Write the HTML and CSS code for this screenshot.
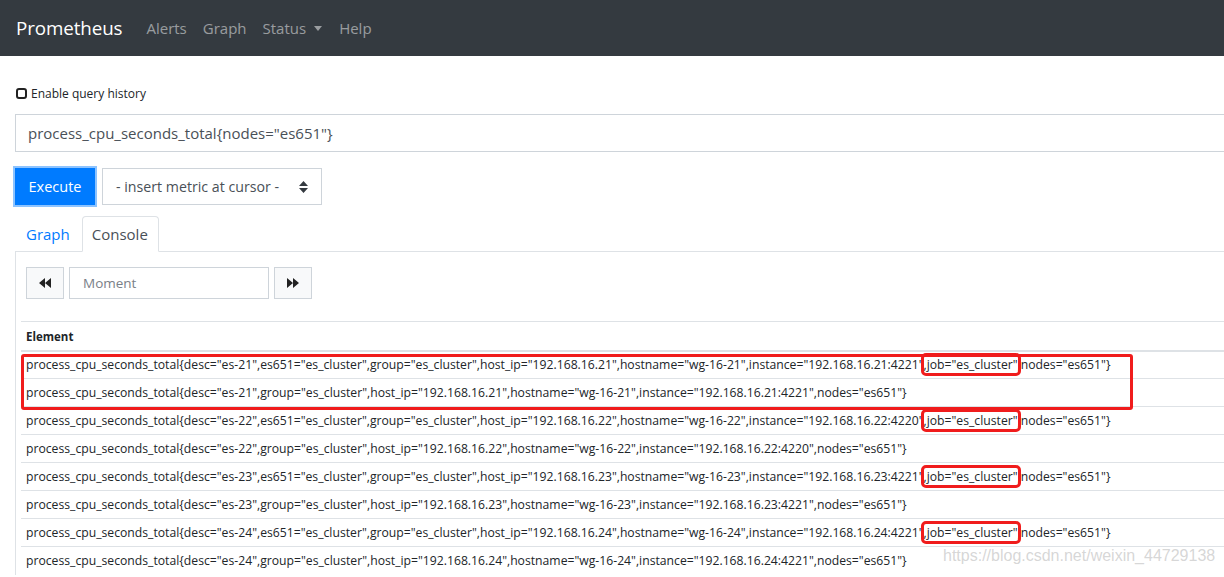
FILE: index.html
```html
<!DOCTYPE html>
<html>
<head>
<meta charset="utf-8">
<link rel="stylesheet" href="styles.css">
</head>
<body>
<nav class="navbar">
  <span class="brand">Prometheus</span>
  <a class="nav-link">Alerts</a>
  <a class="nav-link">Graph</a>
  <a class="nav-link dropdown">Status <span class="caret"></span></a>
  <a class="nav-link">Help</a>
</nav>
<main class="main">
  <label class="history"><input type="checkbox" class="check"> Enable query history</label>
  <div class="expr">process_cpu_seconds_total{nodes="es651"}</div>
  <div class="controls">
    <button class="execute">Execute</button>
    <div class="select">- insert metric at cursor -
      <svg class="updown" width="9" height="12" viewBox="0 0 9 12"><path d="M4.5 0L9 5H0z M4.5 12L0 7h9z" fill="#343a40"/></svg>
    </div>
  </div>
  <div class="tabs">
    <span class="tab">Graph</span>
    <span class="tab active">Console</span>
  </div>
  <div class="panel">
    <div class="moment-row">
      <button class="step"><svg width="12" height="10" viewBox="0 0 12 10"><path d="M6 0v10L0 5z M12 0v10L6 5z" fill="#222"/></svg></button>
      <div class="moment">Moment</div>
      <button class="step"><svg width="12" height="10" viewBox="0 0 12 10"><path d="M0 0v10l6-5z M6 0v10l6-5z" fill="#222"/></svg></button>
    </div>
    <div class="table-wrap">
      <table class="data">
        <thead><tr><th>Element</th></tr></thead>
        <tbody>
          <tr><td>process_cpu_seconds_total{desc="es-21",es651="es_cluster",group="es_cluster",host_ip="192.168.16.21",hostname="wg-16-21",instance="192.168.16.21:4221"<span class="mark">,job="es_cluster"</span>,nodes="es651"}</td></tr>
          <tr><td>process_cpu_seconds_total{desc="es-21",group="es_cluster",host_ip="192.168.16.21",hostname="wg-16-21",instance="192.168.16.21:4221",nodes="es651"}</td></tr>
          <tr><td>process_cpu_seconds_total{desc="es-22",es651="es_cluster",group="es_cluster",host_ip="192.168.16.22",hostname="wg-16-22",instance="192.168.16.22:4220"<span class="mark">,job="es_cluster"</span>,nodes="es651"}</td></tr>
          <tr><td>process_cpu_seconds_total{desc="es-22",group="es_cluster",host_ip="192.168.16.22",hostname="wg-16-22",instance="192.168.16.22:4220",nodes="es651"}</td></tr>
          <tr><td>process_cpu_seconds_total{desc="es-23",es651="es_cluster",group="es_cluster",host_ip="192.168.16.23",hostname="wg-16-23",instance="192.168.16.23:4221"<span class="mark">,job="es_cluster"</span>,nodes="es651"}</td></tr>
          <tr><td>process_cpu_seconds_total{desc="es-23",group="es_cluster",host_ip="192.168.16.23",hostname="wg-16-23",instance="192.168.16.23:4221",nodes="es651"}</td></tr>
          <tr><td>process_cpu_seconds_total{desc="es-24",es651="es_cluster",group="es_cluster",host_ip="192.168.16.24",hostname="wg-16-24",instance="192.168.16.24:4221"<span class="mark">,job="es_cluster"</span>,nodes="es651"}</td></tr>
          <tr><td>process_cpu_seconds_total{desc="es-24",group="es_cluster",host_ip="192.168.16.24",hostname="wg-16-24",instance="192.168.16.24:4221",nodes="es651"}</td></tr>
        </tbody>
      </table>
      <div class="big-mark"></div>
    </div>
  </div>
</main>
<div class="watermark">https://blog.csdn.net/weixin_44729138</div>
</body>
</html>
```
FILE: styles.css
```css
html, body {
  margin: 0;
  padding: 0;
  overflow: hidden;
  height: 577px;
  background: #fff;
}
body {
  font-family: "Open Sans", "Noto Sans", sans-serif;
  color: #212529;
  position: relative;
}
.navbar {
  height: 56px;
  background: #343a40;
  display: flex;
  align-items: center;
  padding: 0 16px;
  box-sizing: border-box;
}
.brand {
  color: #fff;
  font-size: 18.8px;
  margin-right: 16px;
  letter-spacing: -0.1px;
}
.nav-link {
  color: rgba(255,255,255,.5);
  font-size: 15px;
  padding: 0 8px;
  display: flex;
  align-items: center;
}
.caret {
  display: inline-block;
  width: 0;
  height: 0;
  border-left: 4px solid transparent;
  border-right: 4px solid transparent;
  border-top: 5px solid rgba(255,255,255,.5);
  margin-left: 8px;
  margin-right: 1px;
}
.main {
  padding: 0 0 0 15px;
  width: 1300px;
}
.history {
  display: flex;
  align-items: center;
  font-size: 12px;
  margin-top: 30px;
  height: 14px;
  color: #212529;
}
.check {
  appearance: none;
  -webkit-appearance: none;
  width: 11px;
  height: 11px;
  border: 2px solid #222;
  border-radius: 3px;
  margin: 0 4px 0 1px;
  box-sizing: border-box;
}
.expr {
  margin-top: 14px;
  height: 38px;
  border: 1px solid #ced4da;
  box-sizing: border-box;
  padding-left: 12px;
  display: flex;
  align-items: center;
  font-size: 15px;
  color: #495057;
}
.controls {
  display: flex;
  margin-top: 16px;
  height: 37px;
}
.execute {
  width: 80px;
  height: 37px;
  background: #007bff;
  color: #fff;
  border: 1px solid #007bff;
  border-radius: 0;
  font-family: inherit;
  font-size: 14.5px;
  box-shadow: 0 0 0 2px #8cc3ff;
  padding: 0;
}
.select {
  margin-left: 7px;
  width: 220px;
  height: 37px;
  box-sizing: border-box;
  border: 1px solid #ced4da;
  display: flex;
  align-items: center;
  padding-left: 13px;
  font-size: 14.2px;
  color: #495057;
  position: relative;
}
.updown {
  position: absolute;
  right: 13px;
  top: 12px;
}
.tabs {
  display: flex;
  margin-top: 11px;
  border-bottom: 1px solid #dee2e6;
  height: 35px;
}
.tab {
  font-size: 15px;
  color: #007bff;
  padding: 0 11px 0 10px;
  height: 36px;
  box-sizing: border-box;
  display: flex;
  align-items: center;
  border: 1px solid transparent;
  border-radius: 4px 4px 0 0;
}
.tab.active {
  color: #495057;
  background: #fff;
  border-color: #dee2e6 #dee2e6 #fff;
  padding: 0 10px 0 9px;
}
.panel {
  border-left: 1px solid #dee2e6;
  padding: 15px 0 0 5px;
}
.moment-row {
  display: flex;
  margin-left: 5px;
  height: 32px;
}
.step {
  width: 38px;
  height: 32px;
  background: #f8f9fa;
  border: 1px solid #ced4da;
  border-radius: 0;
  display: flex;
  align-items: center;
  justify-content: center;
  padding: 0;
}
.moment {
  width: 200px;
  margin: 0 5px;
  height: 32px;
  box-sizing: border-box;
  border: 1px solid #ced4da;
  padding-left: 13px;
  display: flex;
  align-items: center;
  font-size: 13.5px;
  color: #7a8088;
}
.table-wrap {
  position: relative;
  margin-top: 22px;
}
.data {
  border-collapse: collapse;
  width: 1280px;
  font-size: 12.2px;
}
.data th {
  text-align: left;
  font-weight: 700;
  font-size: 11.5px;
  height: 29px;
  padding: 2px 5px 0;
  border-top: 1px solid #dee2e6;
  border-bottom: 2px solid #dee2e6;
  box-sizing: border-box;
}
.data td {
  height: 28px;
  padding: 0 5px;
  border-top: 1px solid #dee2e6;
  box-sizing: border-box;
  white-space: nowrap;
}
.mark {
  outline: 3px solid #f01c1c;
  outline-offset: 0px;
  border-radius: 2px;
}
.big-mark {
  position: absolute;
  left: 0;
  top: 33px;
  width: 1112px;
  height: 56px;
  border: 3px solid #f01c1c;
  border-radius: 3px;
  box-sizing: border-box;
}
.watermark {
  position: absolute;
  left: 943px;
  top: 547px;
  font-family: "Liberation Sans", Arial, sans-serif;
  font-size: 16px;
  white-space: nowrap;
  color: rgba(180,180,180,.55);
}
```
